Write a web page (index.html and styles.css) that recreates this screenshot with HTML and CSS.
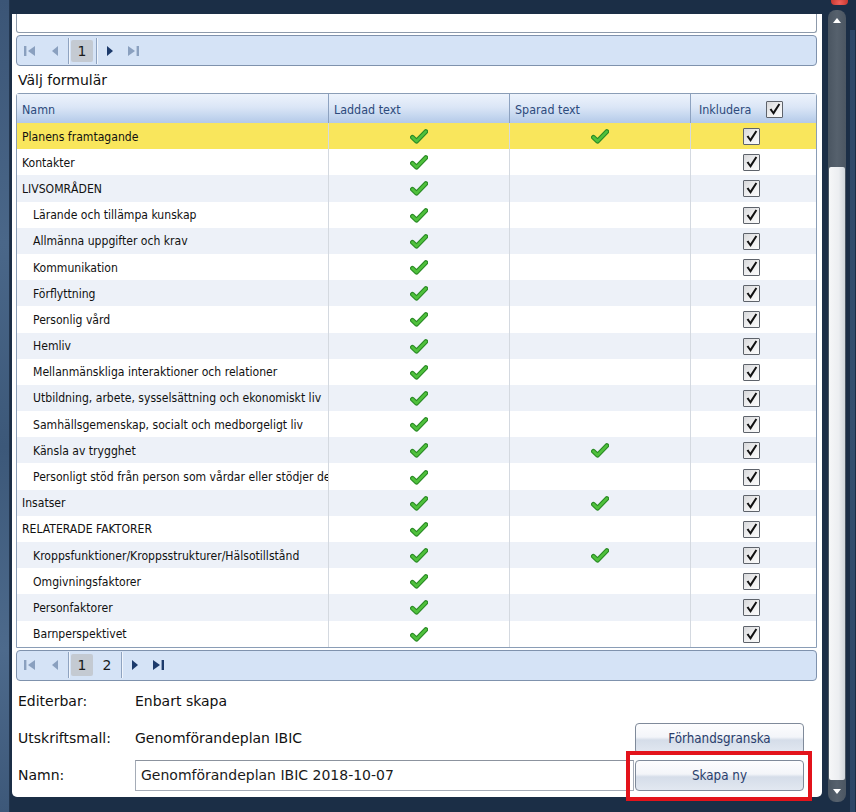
FILE: index.html
```html
<!DOCTYPE html>
<html lang="sv">
<head>
<meta charset="utf-8">
<title>Välj formulär</title>
<link rel="stylesheet" href="styles.css">
</head>
<body>
<svg class="defs" aria-hidden="true">
  <symbol id="ok" viewBox="0 0 18 15">
    <path d="M2.4 8.3 L6.6 12.2 L15.8 2.6" fill="none" stroke="#2a8a25" stroke-width="4.8" stroke-linecap="round" stroke-linejoin="round"/>
    <path d="M2.4 8.3 L6.6 12.2 L15.8 2.6" fill="none" stroke="#4fc13c" stroke-width="2.6" stroke-linecap="round" stroke-linejoin="round"/>
  </symbol>
  <symbol id="tick" viewBox="0 0 17 17">
    <path d="M3.6 8.6 L5.4 7.6 L7.3 10.6 L12.6 2.6 L14.2 3.6 L7.6 14 Z" fill="#111"/>
  </symbol>
  <symbol id="first" viewBox="0 0 12 10"><rect x="0" y="0" width="2.4" height="10"/><path d="M11 0 L4 5 L11 10Z"/></symbol>
  <symbol id="prev" viewBox="0 0 6 10"><path d="M6 0 L0 5 L6 10Z"/></symbol>
  <symbol id="next" viewBox="0 0 6 10"><path d="M0 0 L6 5 L0 10Z"/></symbol>
  <symbol id="last" viewBox="0 0 11 10"><path d="M0 0 L7 5 L0 10Z"/><rect x="8.6" y="0" width="2.4" height="10"/></symbol>
</svg>
<div class="screen">
  <div class="backdrop"></div>
  <div class="dialog">
    <div class="panel">
      <div class="prev-grid"></div>
      <div class="pager">
        <span class="pg-nav pg-first off"><svg width="12" height="10"><use href="#first"/></svg></span>
        <span class="pg-nav pg-prev off"><svg width="6" height="10"><use href="#prev"/></svg></span>
        <span class="pg-sep"></span>
        <span class="pg-pages"><span class="pg-page current">1</span></span>
        <span class="pg-sep"></span>
        <span class="pg-nav pg-next"><svg width="6" height="10"><use href="#next"/></svg></span>
        <span class="pg-nav pg-last off"><svg width="11" height="10"><use href="#last"/></svg></span>
      </div>
      <div class="section-title">Välj formulär</div>
      <div class="grid">
        <div class="grid-head">
          <div class="gh-cell">Namn</div>
          <div class="gh-cell">Laddad text</div>
          <div class="gh-cell">Sparad text</div>
          <div class="gh-cell gh-incl">Inkludera <span class="cbox"><svg width="17" height="17"><use href="#tick"/></svg></span></div>
        </div>
        <div class="grid-body">
          <div class="row selected"><div class="c-name">Planens framtagande</div><div class="c-ok"><svg width="18" height="15"><use href="#ok"/></svg></div><div class="c-ok"><svg width="18" height="15"><use href="#ok"/></svg></div><div class="c-inc"><span class="cbox"><svg width="17" height="17"><use href="#tick"/></svg></span></div></div>
          <div class="row"><div class="c-name">Kontakter</div><div class="c-ok"><svg width="18" height="15"><use href="#ok"/></svg></div><div class="c-ok"></div><div class="c-inc"><span class="cbox"><svg width="17" height="17"><use href="#tick"/></svg></span></div></div>
          <div class="row"><div class="c-name">LIVSOMRÅDEN</div><div class="c-ok"><svg width="18" height="15"><use href="#ok"/></svg></div><div class="c-ok"></div><div class="c-inc"><span class="cbox"><svg width="17" height="17"><use href="#tick"/></svg></span></div></div>
          <div class="row"><div class="c-name sub">Lärande och tillämpa kunskap</div><div class="c-ok"><svg width="18" height="15"><use href="#ok"/></svg></div><div class="c-ok"></div><div class="c-inc"><span class="cbox"><svg width="17" height="17"><use href="#tick"/></svg></span></div></div>
          <div class="row"><div class="c-name sub">Allmänna uppgifter och krav</div><div class="c-ok"><svg width="18" height="15"><use href="#ok"/></svg></div><div class="c-ok"></div><div class="c-inc"><span class="cbox"><svg width="17" height="17"><use href="#tick"/></svg></span></div></div>
          <div class="row"><div class="c-name sub">Kommunikation</div><div class="c-ok"><svg width="18" height="15"><use href="#ok"/></svg></div><div class="c-ok"></div><div class="c-inc"><span class="cbox"><svg width="17" height="17"><use href="#tick"/></svg></span></div></div>
          <div class="row"><div class="c-name sub">Förflyttning</div><div class="c-ok"><svg width="18" height="15"><use href="#ok"/></svg></div><div class="c-ok"></div><div class="c-inc"><span class="cbox"><svg width="17" height="17"><use href="#tick"/></svg></span></div></div>
          <div class="row"><div class="c-name sub">Personlig vård</div><div class="c-ok"><svg width="18" height="15"><use href="#ok"/></svg></div><div class="c-ok"></div><div class="c-inc"><span class="cbox"><svg width="17" height="17"><use href="#tick"/></svg></span></div></div>
          <div class="row"><div class="c-name sub">Hemliv</div><div class="c-ok"><svg width="18" height="15"><use href="#ok"/></svg></div><div class="c-ok"></div><div class="c-inc"><span class="cbox"><svg width="17" height="17"><use href="#tick"/></svg></span></div></div>
          <div class="row"><div class="c-name sub">Mellanmänskliga interaktioner och relationer</div><div class="c-ok"><svg width="18" height="15"><use href="#ok"/></svg></div><div class="c-ok"></div><div class="c-inc"><span class="cbox"><svg width="17" height="17"><use href="#tick"/></svg></span></div></div>
          <div class="row"><div class="c-name sub">Utbildning, arbete, sysselsättning och ekonomiskt liv</div><div class="c-ok"><svg width="18" height="15"><use href="#ok"/></svg></div><div class="c-ok"></div><div class="c-inc"><span class="cbox"><svg width="17" height="17"><use href="#tick"/></svg></span></div></div>
          <div class="row"><div class="c-name sub">Samhällsgemenskap, socialt och medborgeligt liv</div><div class="c-ok"><svg width="18" height="15"><use href="#ok"/></svg></div><div class="c-ok"></div><div class="c-inc"><span class="cbox"><svg width="17" height="17"><use href="#tick"/></svg></span></div></div>
          <div class="row"><div class="c-name sub">Känsla av trygghet</div><div class="c-ok"><svg width="18" height="15"><use href="#ok"/></svg></div><div class="c-ok"><svg width="18" height="15"><use href="#ok"/></svg></div><div class="c-inc"><span class="cbox"><svg width="17" height="17"><use href="#tick"/></svg></span></div></div>
          <div class="row"><div class="c-name sub">Personligt stöd från person som vårdar eller stödjer den enskilde</div><div class="c-ok"><svg width="18" height="15"><use href="#ok"/></svg></div><div class="c-ok"></div><div class="c-inc"><span class="cbox"><svg width="17" height="17"><use href="#tick"/></svg></span></div></div>
          <div class="row"><div class="c-name">Insatser</div><div class="c-ok"><svg width="18" height="15"><use href="#ok"/></svg></div><div class="c-ok"><svg width="18" height="15"><use href="#ok"/></svg></div><div class="c-inc"><span class="cbox"><svg width="17" height="17"><use href="#tick"/></svg></span></div></div>
          <div class="row"><div class="c-name">RELATERADE FAKTORER</div><div class="c-ok"><svg width="18" height="15"><use href="#ok"/></svg></div><div class="c-ok"></div><div class="c-inc"><span class="cbox"><svg width="17" height="17"><use href="#tick"/></svg></span></div></div>
          <div class="row"><div class="c-name sub">Kroppsfunktioner/Kroppsstrukturer/Hälsotillstånd</div><div class="c-ok"><svg width="18" height="15"><use href="#ok"/></svg></div><div class="c-ok"><svg width="18" height="15"><use href="#ok"/></svg></div><div class="c-inc"><span class="cbox"><svg width="17" height="17"><use href="#tick"/></svg></span></div></div>
          <div class="row"><div class="c-name sub">Omgivningsfaktorer</div><div class="c-ok"><svg width="18" height="15"><use href="#ok"/></svg></div><div class="c-ok"></div><div class="c-inc"><span class="cbox"><svg width="17" height="17"><use href="#tick"/></svg></span></div></div>
          <div class="row"><div class="c-name sub">Personfaktorer</div><div class="c-ok"><svg width="18" height="15"><use href="#ok"/></svg></div><div class="c-ok"></div><div class="c-inc"><span class="cbox"><svg width="17" height="17"><use href="#tick"/></svg></span></div></div>
          <div class="row"><div class="c-name sub">Barnperspektivet</div><div class="c-ok"><svg width="18" height="15"><use href="#ok"/></svg></div><div class="c-ok"></div><div class="c-inc"><span class="cbox"><svg width="17" height="17"><use href="#tick"/></svg></span></div></div>
        </div>
      </div>
      <div class="pager pager-bottom">
        <span class="pg-nav pg-first off"><svg width="12" height="10"><use href="#first"/></svg></span>
        <span class="pg-nav pg-prev off"><svg width="6" height="10"><use href="#prev"/></svg></span>
        <span class="pg-sep"></span>
        <span class="pg-pages"><span class="pg-page current">1</span><span class="pg-page">2</span></span>
        <span class="pg-sep"></span>
        <span class="pg-nav pg-next"><svg width="6" height="10"><use href="#next"/></svg></span>
        <span class="pg-nav pg-last"><svg width="11" height="10"><use href="#last"/></svg></span>
      </div>
      <div class="form">
        <div class="f-label">Editerbar:</div>
        <div class="f-value">Enbart skapa</div>
        <div class="f-empty"></div>
        <div class="f-label">Utskriftsmall:</div>
        <div class="f-value">Genomförandeplan IBIC</div>
        <div class="btn">Förhandsgranska</div>
        <div class="f-label">Namn:</div>
        <div class="f-input">Genomförandeplan IBIC 2018-10-07</div>
        <div class="btn">Skapa ny</div>
      </div>
      <div class="highlight"></div>
    </div>
    <div class="scrollbar">
      <div class="sb-btn"><span class="tri-up"></span></div>
      <div class="sb-space"></div>
      <div class="sb-thumb"></div>
      <div class="sb-btn sb-down"><span class="tri-down"></span></div>
    </div>
    <div class="backdrop-right"></div>
  </div>
  <div class="close-btn"></div>
</div>
</body>
</html>
```

FILE: styles.css
```css
* { box-sizing: border-box; }
html, body { margin: 0; padding: 0; }
body {
  width: 856px;
  height: 812px;
  overflow: hidden;
  background: #1b2e46;
  font-family: "DejaVu Sans", Verdana, sans-serif;
  color: #111;
}
.defs { display: block; width: 0; height: 0; overflow: hidden; }

.screen { display: flex; height: 812px; position: relative; }
.backdrop {
  width: 10px;
  background: linear-gradient(180deg, #3b5576 0%, #4a6789 30%, #3c5879 55%, #4d6a8c 80%, #3d5879 100%);
  border-right: 1px solid #22364f;
}
.dialog {
  flex: 1;
  display: flex;
  align-items: flex-start;
  padding: 10px 0 0 2px;
  background: #1b2e46;
}
.panel {
  width: 810px;
  height: 783px;
  margin-top: 4px;
  background: #fff;
  border-radius: 0 0 5px 5px;
  padding: 0 5px 0 4px;
  display: flex;
  flex-direction: column;
  position: relative;
}

/* top remnant of previous grid */
.prev-grid {
  height: 19px;
  border: 1px solid #8d9aab;
  border-top: none;
  border-radius: 0 0 3px 3px;
}

/* pager */
.pager {
  height: 31px;
  margin-top: 2px;
  background: #d5e3f6;
  border: 1px solid #7f92ad;
  border-radius: 4px;
  display: flex;
  align-items: center;
}
.pg-nav { height: 29px; display: flex; align-items: center; justify-content: center; fill: #1c3a6b; }
.pg-nav.off { fill: #8aa0bf; }
.pg-first { width: 25px; }
.pg-prev { width: 26px; }
.pg-next { width: 23px; }
.pg-last { width: 25px; }
.pg-sep { width: 2px; height: 26px; border-left: 1px solid #8fa3c0; border-right: 1px solid #f0f5fc; }
.pg-pages { display: flex; gap: 3px; margin: 0 3px 0 1px; }
.pg-page {
  width: 22px;
  height: 22px;
  display: flex;
  align-items: center;
  justify-content: center;
  font-size: 14px;
  color: #1a1a1a;
  border-radius: 2px;
}
.pg-page.current { background: #c4cad2; }

.section-title {
  height: 27px;
  display: flex;
  align-items: center;
  padding-left: 2px;
  font-size: 14px;
  color: #111;
}

/* grid */
.grid {
  border: 1px solid #8a9db6;
  border-radius: 3px 3px 0 0;
  font-family: "DejaVu Sans", Tahoma, sans-serif;
  font-stretch: condensed;
  font-size: 12.1px;
}
.grid-head, .row {
  display: grid;
  grid-template-columns: 312px 181px 181px 125px;
}
.grid-head {
  height: 29px;
  background: linear-gradient(180deg, #edf3fc 0%, #dbe6f6 45%, #c5d7ef 75%, #b4c9e8 100%);
}
.gh-cell {
  display: flex;
  align-items: center;
  padding-left: 5px;
  padding-top: 1px;
  color: #2c4a7c;
  border-right: 1px solid #8da2c0;
  font-size: 12.4px;
}
.gh-cell:last-child { border-right: none; }
.gh-incl { padding-left: 8px; gap: 15px; }

.row { height: 26.2px; background: #fff; }
.row:nth-child(odd) { background: #edf1f8; }
.row.selected { background: #f9e65c; }
.row > div { border-right: 1px solid #d4d9e0; display: flex; align-items: center; padding-top: 1px; }
.row > div:last-child { border-right: none; }
.c-name { padding-left: 5px; white-space: nowrap; overflow: hidden; color: #111; }
.c-name.sub { padding-left: 16px; }
.c-ok { justify-content: center; }
.c-inc { justify-content: center; padding-right: 5px; }

.cbox {
  width: 17px;
  height: 17px;
  display: inline-flex;
  border: 1px solid #5e636b;
  border-radius: 1px;
  background: linear-gradient(135deg, #d8d9db 0%, #eeeeef 50%, #fbfbfb 100%);
}
.cbox svg { margin: -1px; }

/* form */
.form {
  margin-top: 5px;
  display: grid;
  grid-template-columns: 116px 499px 169px;
  grid-template-rows: 31px 31px 31px;
  column-gap: 1px;
  row-gap: 6px;
  padding-left: 2px;
  font-size: 14px;
}
.f-label, .f-value { display: flex; align-items: center; color: #111; }
.f-input {
  display: flex;
  align-items: center;
  padding-left: 5px;
  border: 1px solid #a5acb7;
  border-top-color: #8c939e;
  background: #fff;
  color: #1a1a1a;
}
.btn {
  display: flex;
  align-items: center;
  justify-content: center;
  border: 1px solid #7f8a9a;
  border-radius: 4px;
  background: linear-gradient(180deg, #fdfdfe 0%, #f3f5f9 45%, #d5dde9 55%, #e2e8f1 100%);
  font-family: "DejaVu Sans", Tahoma, sans-serif;
  font-stretch: condensed;
  font-size: 13.3px;
  color: #2a3e6c;
}

.highlight {
  position: absolute;
  left: 614px;
  top: 737px;
  width: 186px;
  height: 50px;
  border: 4.5px solid #e3131b;
}

/* scrollbar */
.scrollbar {
  width: 18px;
  height: 792px;
  margin-left: 6px;
  border-radius: 8px;
  background: linear-gradient(90deg, #4a5561, #56616d 50%, #4b5662);
  display: flex;
  flex-direction: column;
}
.sb-btn { height: 20px; display: flex; align-items: center; justify-content: center; }
.sb-down { height: 22px; }
.sb-space { height: 137px; }
.sb-thumb {
  flex: 1;
  margin: 0 1px;
  border-radius: 2px;
  background: linear-gradient(90deg, #f6f7f8 0%, #eceef1 60%, #d0d6dc 100%);
}
.tri-up { width: 0; height: 0; border-left: 4px solid transparent; border-right: 4px solid transparent; border-bottom: 5px solid #fff; }
.tri-down { width: 0; height: 0; border-left: 4px solid transparent; border-right: 4px solid transparent; border-top: 5px solid #fff; }

.backdrop-right {
  width: 5px;
  height: 782px;
  margin: 20px 0 0 4px;
  background: linear-gradient(180deg, #2d4767, #34506f 50%, #2c4666);
}

.close-btn {
  position: absolute;
  left: 831px;
  top: -6px;
  width: 17px;
  height: 11px;
  border-radius: 4px;
  background: radial-gradient(circle at 50% 80%, #f0605a, #b3271f);
}
```
